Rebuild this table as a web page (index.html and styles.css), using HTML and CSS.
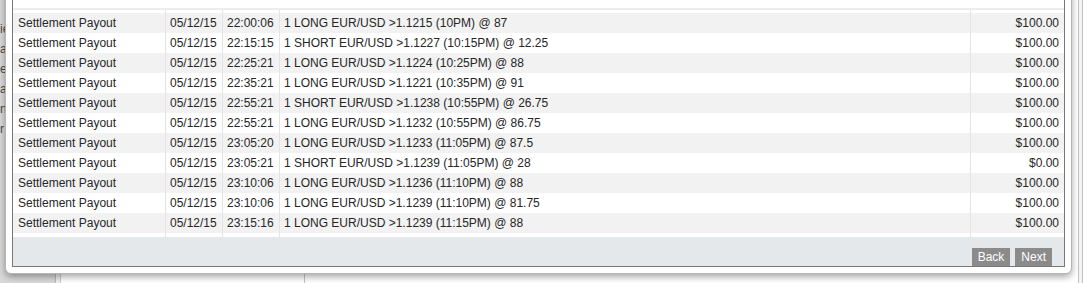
FILE: index.html
```html
<!DOCTYPE html>
<html>
<head>
<meta charset="utf-8">
<link rel="stylesheet" href="styles.css">
</head>
<body>
<div class="page">
  <aside class="side">
    <div class="side-list">
      <div class="side-item">ie</div>
      <div class="side-item">a</div>
      <div class="side-item">es</div>
      <div class="side-item">a</div>
      <div class="side-item">nd</div>
      <div class="side-item">r</div>
    </div>
  </aside>
  <div class="gutter"></div>
  <main class="main">
    <div class="main-col"></div>
    <div class="main-rest"></div>
    <div class="scroll-track"></div>
  </main>
</div>

<div class="modal">
  <div class="panel">
    <div class="ledger">
      <div class="ledger-head"></div>
      <div class="row spacer top"><span></span><span></span><span></span><span></span><span></span></div>
      <div class="row"><span>Settlement Payout</span><span>05/12/15</span><span>22:00:06</span><span>1 LONG EUR/USD &gt;1.1215 (10PM) @ 87</span><span class="amt">$100.00</span></div>
      <div class="row"><span>Settlement Payout</span><span>05/12/15</span><span>22:15:15</span><span>1 SHORT EUR/USD &gt;1.1227 (10:15PM) @ 12.25</span><span class="amt">$100.00</span></div>
      <div class="row"><span>Settlement Payout</span><span>05/12/15</span><span>22:25:21</span><span>1 LONG EUR/USD &gt;1.1224 (10:25PM) @ 88</span><span class="amt">$100.00</span></div>
      <div class="row"><span>Settlement Payout</span><span>05/12/15</span><span>22:35:21</span><span>1 LONG EUR/USD &gt;1.1221 (10:35PM) @ 91</span><span class="amt">$100.00</span></div>
      <div class="row"><span>Settlement Payout</span><span>05/12/15</span><span>22:55:21</span><span>1 SHORT EUR/USD &gt;1.1238 (10:55PM) @ 26.75</span><span class="amt">$100.00</span></div>
      <div class="row"><span>Settlement Payout</span><span>05/12/15</span><span>22:55:21</span><span>1 LONG EUR/USD &gt;1.1232 (10:55PM) @ 86.75</span><span class="amt">$100.00</span></div>
      <div class="row"><span>Settlement Payout</span><span>05/12/15</span><span>23:05:20</span><span>1 LONG EUR/USD &gt;1.1233 (11:05PM) @ 87.5</span><span class="amt">$100.00</span></div>
      <div class="row"><span>Settlement Payout</span><span>05/12/15</span><span>23:05:21</span><span>1 SHORT EUR/USD &gt;1.1239 (11:05PM) @ 28</span><span class="amt">$0.00</span></div>
      <div class="row"><span>Settlement Payout</span><span>05/12/15</span><span>23:10:06</span><span>1 LONG EUR/USD &gt;1.1236 (11:10PM) @ 88</span><span class="amt">$100.00</span></div>
      <div class="row"><span>Settlement Payout</span><span>05/12/15</span><span>23:10:06</span><span>1 LONG EUR/USD &gt;1.1239 (11:10PM) @ 81.75</span><span class="amt">$100.00</span></div>
      <div class="row"><span>Settlement Payout</span><span>05/12/15</span><span>23:15:16</span><span>1 LONG EUR/USD &gt;1.1239 (11:15PM) @ 88</span><span class="amt">$100.00</span></div>
      <div class="row spacer bottom"><span></span><span></span><span></span><span></span><span></span></div>
    </div>
    <div class="footer">
      <button class="btn">Back</button>
      <button class="btn">Next</button>
    </div>
  </div>
</div>
</body>
</html>
```

FILE: styles.css
```css
* { box-sizing: border-box; }
html, body {
  margin: 0;
  padding: 0;
  width: 1087px;
  height: 283px;
  overflow: hidden;
  background: #fff;
  font-family: "Liberation Sans", Arial, sans-serif;
  font-size: 12px;
}

/* background page */
.page {
  display: flex;
  height: 283px;
}
.side {
  width: 56px;
  background: #d9d9d9;
  border-right: 1px solid #b9b9b9;
  overflow: hidden;
}
.side-list {
  padding-top: 19px;
}
.side-item {
  height: 20px;
  line-height: 20px;
  color: #4a4a4a;
  white-space: nowrap;
}
.gutter {
  width: 5px;
  background: #efefef;
  border-right: 1px solid #c9c9c9;
}
.main {
  flex: 1;
  display: flex;
}
.main-col {
  width: 244px;
  border-right: 1px solid #c4c4c4;
}
.main-rest { flex: 1; }
.scroll-track {
  width: 5px;
  margin-right: 4px;
  border-left: 1px solid #c2c2c2;
  border-right: 1px solid #c2c2c2;
  background: #f4f4f4;
}

/* modal dialog over the page */
.modal {
  position: absolute;
  left: 5px;
  top: -40px;
  width: 1067px;
  background: #fff;
  border: 1px solid #b5b5b5;
  border-radius: 6px;
  padding: 0 6px 6px 6px;
  box-shadow: 0 3px 7px rgba(0, 0, 0, 0.35);
}
.panel {
  border: 1px solid #777;
  border-top: none;
  background: #fff;
}
.ledger-head {
  height: 49px;
  border-bottom: 2px solid #ececec;
}
.row {
  display: grid;
  grid-template-columns: 153px 57px 57px 691px 93px;
  height: 20px;
  line-height: 20px;
  color: #262626;
}
.row:nth-child(odd) { background: #f2f2f2; }
.row.spacer { background: #fff; }
.row.spacer.top { height: 3px; }
.row.spacer.bottom { height: 4px; }
.row span {
  padding: 0 4px;
  border-right: 1px solid #e3e3e3;
  white-space: nowrap;
  overflow: hidden;
}
.row span:first-child { padding-left: 5px; }
.row span:last-child { border-right: none; }
.row span.amt {
  text-align: right;
  padding-right: 5px;
}

.footer {
  height: 29px;
  background: #e4e8eb;
  display: flex;
  justify-content: flex-end;
  align-items: flex-end;
  gap: 5px;
  padding-right: 12px;
}
.btn {
  height: 18px;
  line-height: 18px;
  padding: 0 6px;
  border: none;
  background: #8b8b8b;
  color: #fff;
  font-family: "Liberation Sans", Arial, sans-serif;
  font-size: 12px;
  margin: 0;
}
```
